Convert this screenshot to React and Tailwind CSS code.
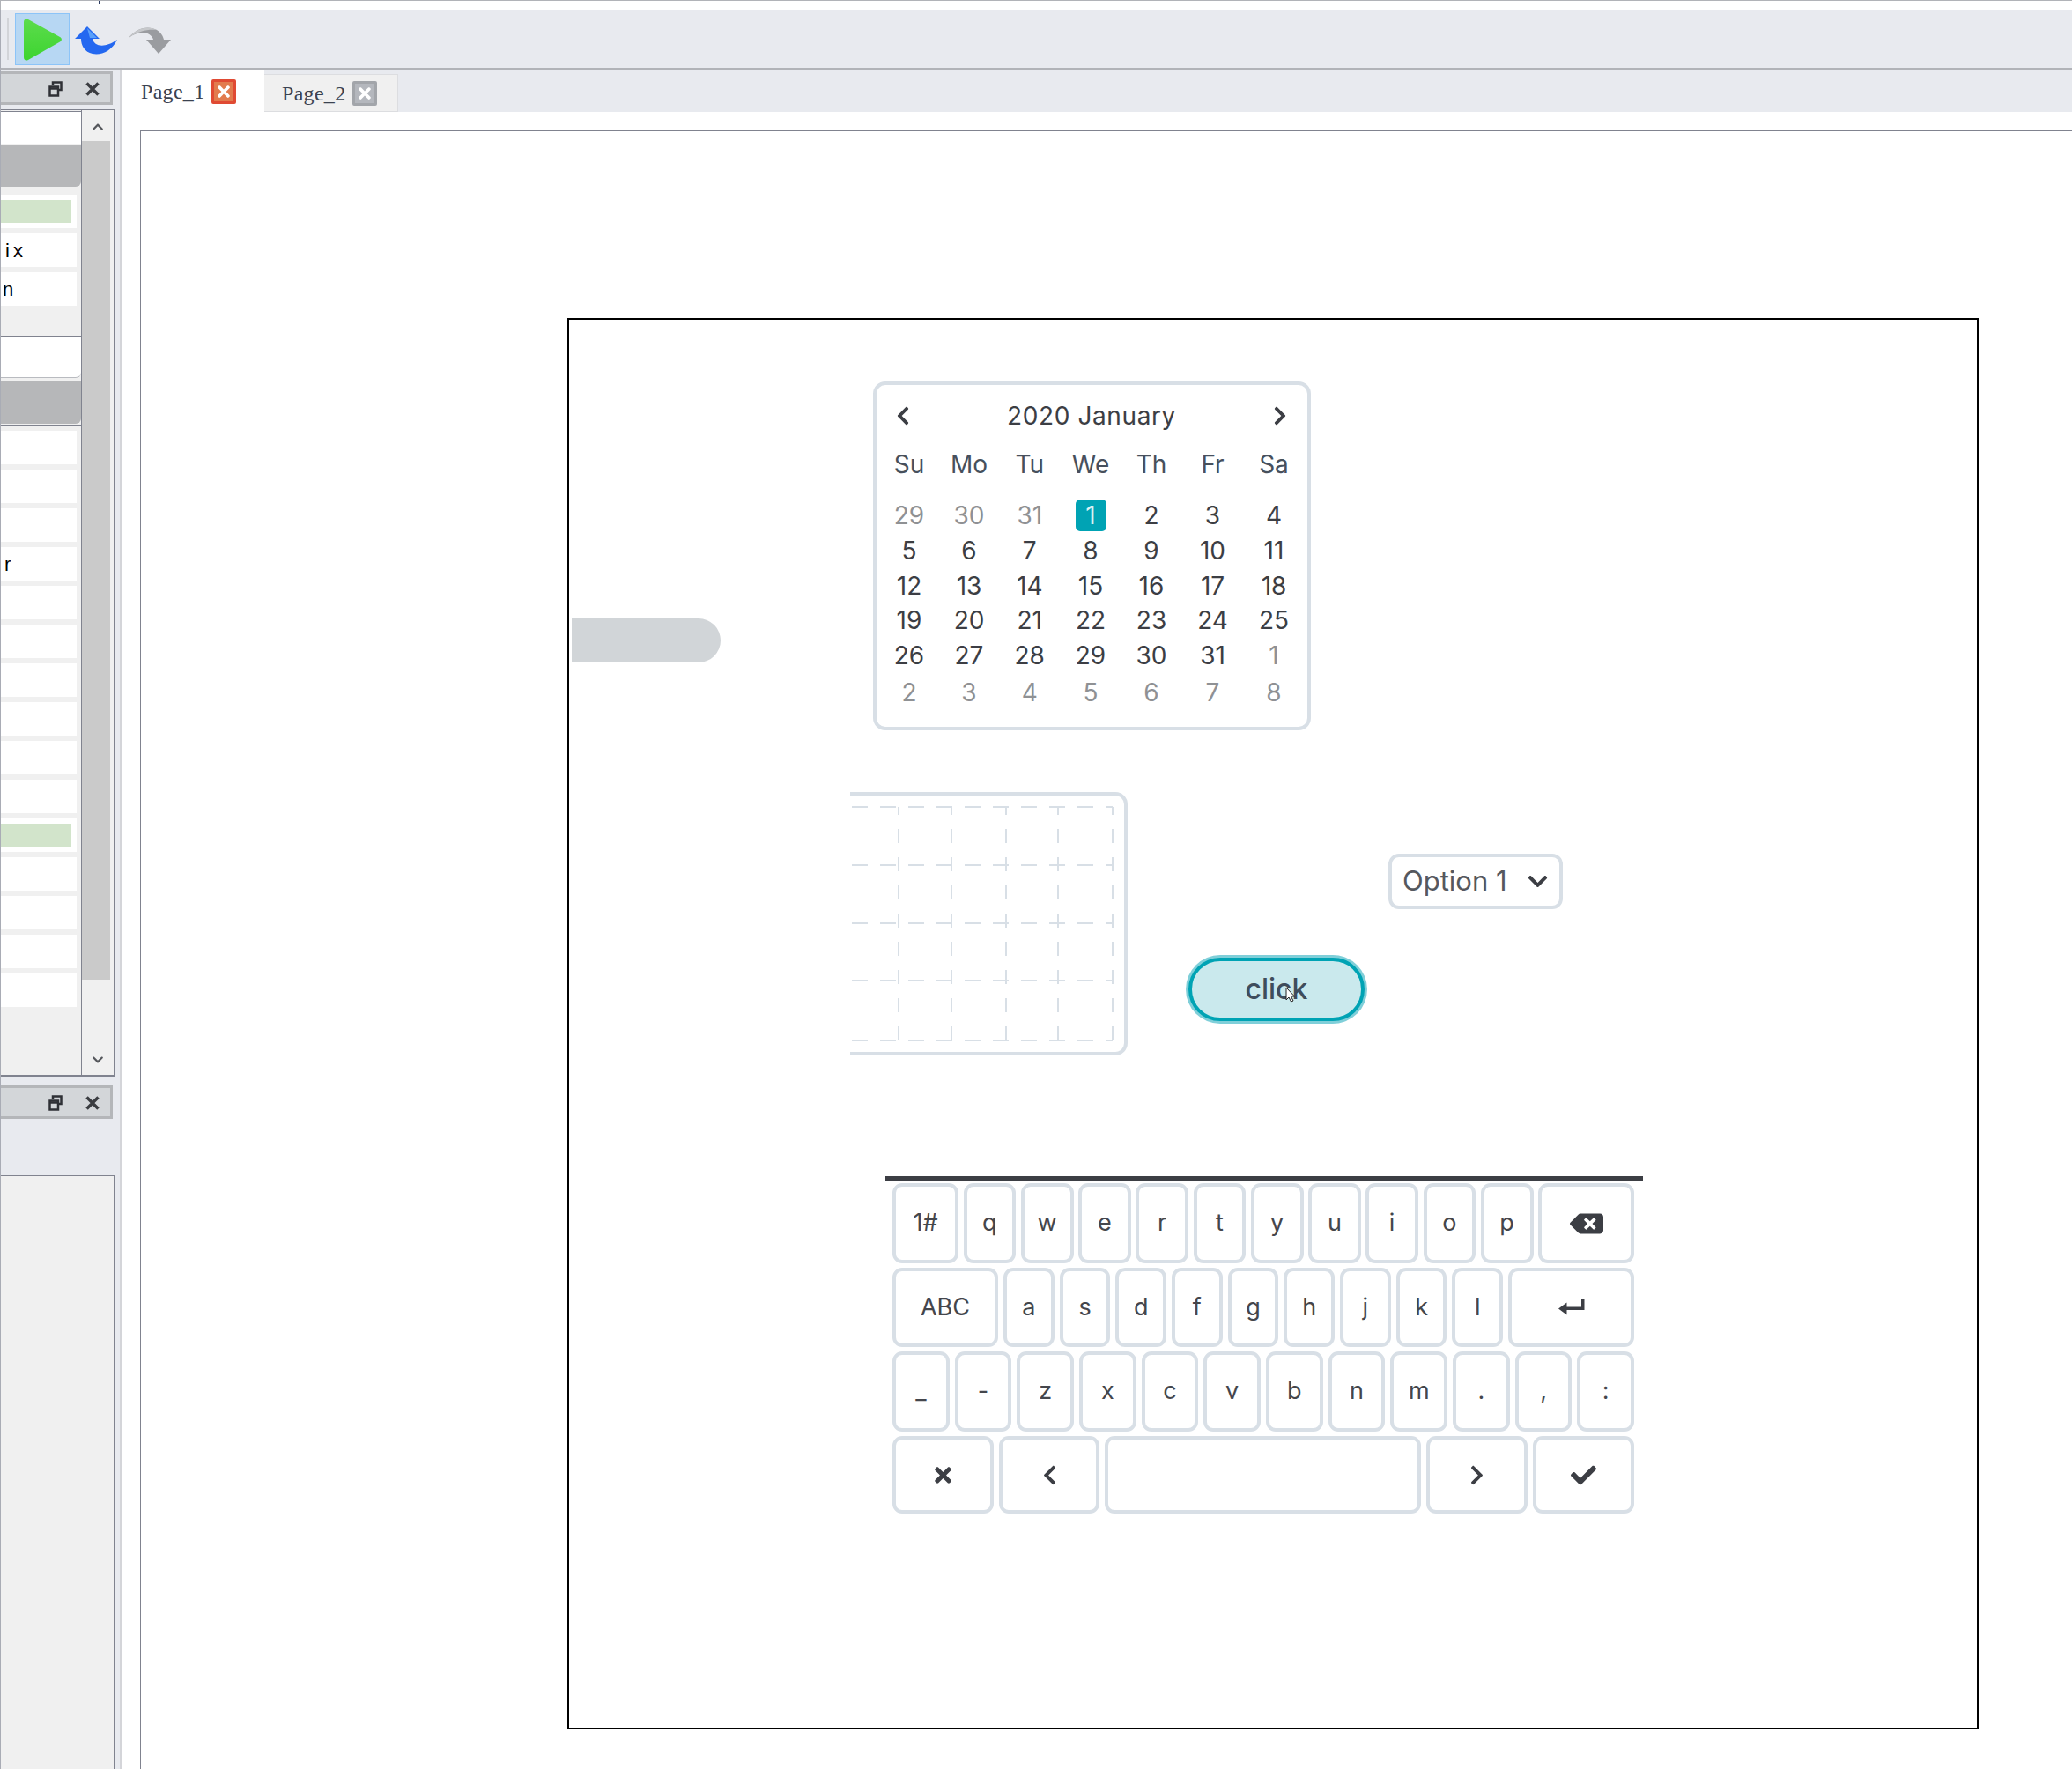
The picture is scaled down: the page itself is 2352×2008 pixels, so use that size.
import React from 'react';
import { FaBackspace, FaTimes, FaChevronLeft, FaChevronRight, FaCheck, FaChevronDown, FaChevronUp } from 'react-icons/fa';

const weekDays = ['Su', 'Mo', 'Tu', 'We', 'Th', 'Fr', 'Sa'];
const calendarRows = [
    [[29, 1], [30, 1], [31, 1], [1, 2], [2], [3], [4]],
    [[5], [6], [7], [8], [9], [10], [11]],
    [[12], [13], [14], [15], [16], [17], [18]],
    [[19], [20], [21], [22], [23], [24], [25]],
    [[26], [27], [28], [29], [30], [31], [1, 1]],
    [[2, 1], [3, 1], [4, 1], [5, 1], [6, 1], [7, 1], [8, 1]],
];
const rowHeights = ['h-[40px]', 'h-[40px]', 'h-[39px]', 'h-[40px]', 'h-[41px]', 'h-[43px]'];
const calendarCols = 'grid grid-cols-[68px_68px_69.5px_69px_69px_70px_69px]';

const EnterIcon = () => (
    <svg width="30" height="18" viewBox="0 0 30 18" fill="#3c3e44">
        <path d="M26 0h3.500v12H9.500v5.500L0 10.500 9.500 3.500V8.500H26z" />
    </svg>
);

const Key = ({ children, className = 'flex-1' }) => (
    <div className={`${className} min-w-0 border-[4px] border-[#d8dfe6] rounded-[11px] flex items-center justify-center text-[27px] text-[#44464c] bg-white`}>
        {children}
    </div>
);

const Keyboard = () => (
    <div className="absolute left-[359px] top-[972px] w-[860px] border-t-[6px] border-[#3c3e44] pt-[2px] pl-[8px] pr-[10px] flex flex-col gap-[5px]">
        <div className="flex gap-[5.5px] h-[91px]">
            <Key className="w-[75px]">1#</Key>
            {'qwertyuiop'.split('').map((k) => <Key key={k}>{k}</Key>)}
            <Key className="w-[109px]"><FaBackspace size={38} color="#3c3e44" /></Key>
        </div>
        <div className="flex gap-[6px] h-[90px]">
            <Key className="w-[120px]">ABC</Key>
            {'asdfghjkl'.split('').map((k) => <Key key={k}>{k}</Key>)}
            <Key className="w-[143px]"><EnterIcon /></Key>
        </div>
        <div className="flex gap-[6px] h-[91px]">
            {['_', '-', 'z', 'x', 'c', 'v', 'b', 'n', 'm', '.', ',', ':'].map((k) => <Key key={k}>{k}</Key>)}
        </div>
        <div className="flex gap-[6px] h-[88px]">
            <Key className="w-[115px]"><FaTimes size={27} color="#3c3e44" /></Key>
            <Key className="w-[114px]"><FaChevronLeft size={25} color="#3c3e44" /></Key>
            <Key />
            <Key className="w-[115px]"><FaChevronRight size={25} color="#3c3e44" /></Key>
            <Key className="w-[115px]"><FaCheck size={29} color="#3c3e44" /></Key>
        </div>
    </div>
);

const Calendar = () => (
    <div className="absolute left-[345px] top-[70px] w-[497px] h-[396px] border-[4px] border-[#d8dfe6] rounded-[14px] pl-[3px] text-[#3c3e44]">
        <div className="flex items-center justify-between h-[64px] pt-[5px] pl-[15px] pr-[19px]">
            <FaChevronLeft size={24} />
            <span className="text-[28px] tracking-[0.6px]">2020 January</span>
            <FaChevronRight size={24} />
        </div>
        <div className={`${calendarCols} h-[48px] pt-[4px] items-center text-[28px] text-[#47505c] text-center`}>
            {weekDays.map((d) => <span key={d}>{d}</span>)}
        </div>
        <div className="mt-[15px]">
            {calendarRows.map((row, i) => (
                <div key={i} className={`${calendarCols} ${rowHeights[i]} items-center text-[28px] text-center`}>
                    {row.map(([n, kind], j) => (
                        <span key={j} className="flex justify-center">
                            {kind === 2 ? (
                                <span className="w-[35px] h-[36px] bg-[#00a3b4] rounded-[5px] text-[#d9f1f4] flex items-center justify-center">{n}</span>
                            ) : (
                                <span className={kind === 1 ? 'text-[#8f9194]' : ''}>{n}</span>
                            )}
                        </span>
                    ))}
                </div>
            ))}
        </div>
    </div>
);

const hLines = [13, 79, 145, 210, 278];
const vLines = [55, 115, 177, 236, 298];

const ChartBox = () => (
    <div className="absolute left-[319px] top-[536px] w-[315px] h-[299px] border-[4px] border-l-0 border-[#d8dfe6] rounded-r-[14px]">
        <svg width="311" height="291" className="block" stroke="#d8dfe6" strokeWidth="2" fill="none">
            {hLines.map((y) => (
                <line key={y} x1="2" x2="298" y1={y} y2={y} strokeDasharray="18 14" />
            ))}
            {vLines.map((x) => (
                <line key={x} x1={x} x2={x} y1="13" y2="278" strokeDasharray="16 16" strokeDashoffset="7" />
            ))}
        </svg>
    </div>
);

const SelectBox = () => (
    <div className="absolute left-[930px] top-[606px] w-[198px] h-[63px] border-[4px] border-[#d8dfe6] rounded-[12px] flex items-center justify-between pl-[12px] pr-[12px]">
        <span className="text-[31px] text-[#55585e]">Option 1</span>
        <FaChevronDown size={25} color="#3c3e44" />
    </div>
);

const ClickButton = () => (
    <div className="absolute left-[703px] top-[724px] w-[200px] h-[72px] bg-[#cae9ed] border-[4px] border-[#00a3b4] rounded-full shadow-[0_0_0_3px_#80cfd9] flex items-center justify-center">
        <span className="text-[32px] font-medium text-[#3f4d5c] relative">
            click
            <svg className="absolute left-[45px] top-[21px]" width="13" height="19" viewBox="0 0 13 19">
                <path d="M1 1v14l3-3 2.500 5 2.500-1-2.500-5h4z" fill="#fff" stroke="#222" strokeWidth="1" />
            </svg>
        </span>
    </div>
);

const PanelHeader = () => (
    <div className="h-[38px] w-[127px] bg-[#d3d6d9] border-[3px] border-l-0 border-[#b4b6b9] flex items-center justify-end pr-[12px] gap-[26px]">
        <svg className="mt-[1px]" width="16" height="18" viewBox="0 0 16 18" fill="none" stroke="#2f3136" strokeWidth="2.500">
            <path d="M5 5V1.500h9.500V10H11" />
            <path d="M1.500 6.500H11V16.500H1.500z" />
            <path d="M1.500 8.500H11" />
        </svg>
        <svg className="mt-[1px]" width="16" height="16" viewBox="0 0 16 16" stroke="#3a3c40" strokeWidth="3.500">
            <path d="M1.500 1.500l13 13M14.500 1.500l-13 13" />
        </svg>
    </div>
);

const ListRow = ({ green, label, labelClass }) => (
    <div className="h-[38px] w-[86px] bg-white flex items-center overflow-hidden">
        {green && <div className="h-[26px] w-[80px] bg-[#d2e4cb]" />}
        {label && <span className={`font-['Liberation_Sans',sans-serif] text-[22px] text-black ${labelClass}`}>{label}</span>}
    </div>
);

const secondGroup = Array.from({ length: 15 }, (_, i) => i);

const Sidebar = () => (
    <div className="w-[138px] shrink-0 border-l border-[#a9acb5] border-r-2 border-r-[#d4d5d9] pt-[2px] flex flex-col">
        <PanelHeader />
        <div className="mt-[5px] w-[129px] h-[1098px] border-t border-r border-b-2 border-[#80838f] bg-[#f0f0f0] flex">
            <div className="w-[92px] border-r border-[#80838f] flex flex-col pt-[1px]">
                <div className="h-[38px] bg-white border-t border-b border-[#80838f]" />
                <div className="mt-[1px] h-[47px] bg-[#b6b7b9] rounded-br-[6px]" />
                <div className="mt-[2px] h-[168px] border-t border-b border-[#80838f] pt-[6px] flex flex-col gap-[6px]">
                    <ListRow green />
                    <ListRow label="ix" labelClass="ml-[5px] tracking-[4px]" />
                    <ListRow label="n" labelClass="ml-[2px]" />
                </div>
                <div className="mt-[1px] h-[46px] bg-white rounded-br-[6px] border-b border-[#b9bbc0]" />
                <div className="mt-[3px] h-[49px] bg-[#b6b7b9] rounded-br-[6px]" />
                <div className="mt-[1px] border-t border-[#80838f] pt-[6px] flex flex-col gap-[6px]">
                    {secondGroup.map((i) => (
                        <ListRow key={i} green={i === 10} label={i === 3 ? 'r' : null} labelClass="ml-[4px]" />
                    ))}
                </div>
            </div>
            <div className="w-[35px] flex flex-col">
                <div className="h-[35px] pt-[2px] flex items-center justify-center text-[#55575c]"><FaChevronUp size={14} /></div>
                <div className="h-[952px] w-[32px] bg-[#cacaca]" />
                <div className="flex-1 flex items-end justify-center pb-[10px] text-[#55575c]"><FaChevronDown size={14} /></div>
            </div>
        </div>
        <div className="mt-[10px]"><PanelHeader /></div>
        <div className="mt-[64px] w-[129px] flex-1 bg-[#f0f0f0] border-t border-r border-[#80838f]" />
    </div>
);

const Toolbar = () => (
    <div className="h-[68px] shrink-0 bg-[#e8eaef] border-b-2 border-[#b1b3b8] border-l border-l-[#a9acb5] flex items-center pl-[7px]">
        <div className="w-[2px] h-[48px] bg-[#d2d4d8]" />
        <div className="ml-[7px] w-[62px] h-[59px] bg-[#b7d7f3] border border-[#8cc4f8] flex items-center justify-center">
            <svg className="mt-[1px]" width="46" height="50" viewBox="0 0 46 50">
                <defs>
                    <linearGradient id="playFill" x1="0" y1="0" x2="0" y2="1">
                        <stop offset="0" stopColor="#5cdc4c" />
                        <stop offset="1" stopColor="#3dd430" />
                    </linearGradient>
                </defs>
                <path d="M2 5c0-3 2-4.500 5-3l36 20c2.500 1.500 2.500 4 0 5.500L7 48c-3 1.500-5 0-5-3z" fill="url(#playFill)" />
            </svg>
        </div>
        <svg className="ml-[5px] mt-[3px]" width="50" height="34" viewBox="0 0 50 34">
            <path d="M15 1 29 15H21c2 9 14 11 28 1-6 13-18 18-28 16C12 30 8 23 8 15H1z" fill="#2468f0" />
            <path d="M15 3 26 14H18" fill="#5aa0fa" />
        </svg>
        <svg className="ml-[11px] mt-[3px]" width="50" height="34" viewBox="0 0 50 34">
            <path d="M1 14C10 2 24 0 33 5c5 3 7 7 8 11h8L35 32 21 16h8C27 8 14 4 1 14z" fill="#9a9ca0" />
            <path d="M1 14C10 2 24 0 33 5c-8-1-20 0-32 9z" fill="#c6c8cb" />
        </svg>
    </div>
);

const Tabs = () => (
    <div className="h-[48px] shrink-0 flex items-end font-['Liberation_Serif',serif] text-[24px] tracking-[0.3px] text-[#3b4250]">
        <div className="w-[162px] h-[47px] bg-white flex items-center pl-[22px] pt-[1px]">
            <span>Page_1</span>
            <div className="ml-[8px] w-[28px] h-[28px] bg-[#e27b4e] border-[3px] border-[#e04a33] rounded-[2px] flex items-center justify-center">
                <FaTimes size={20} color="#fff" />
            </div>
        </div>
        <div className="w-[152px] h-[43px] bg-[#f0f0f0] border-t border-r border-b border-[#dcdde0] flex items-center pl-[20px] pt-[1px]">
            <span>Page_2</span>
            <div className="ml-[8px] w-[28px] h-[28px] bg-[#b4b7bd] border-[3px] border-[#a2a5aa] rounded-[2px] flex items-center justify-center">
                <FaTimes size={20} color="#fff" />
            </div>
        </div>
    </div>
);

const App = () => {
    return (
        <div className="w-[2352px] h-[2008px] overflow-hidden flex flex-col bg-[#e8eaef] font-[Inter,sans-serif]">
            <div className="h-[11px] shrink-0 bg-white border-t border-l border-[#b1b3b8] pl-[111px]">
                <div className="w-[2px] h-[3px] bg-[#2a3a60]" />
            </div>
            <Toolbar />
            <div className="flex-1 flex min-h-0">
                <Sidebar />
                <div className="flex-1 flex flex-col min-w-0">
                    <Tabs />
                    <div className="flex-1 bg-white pl-[21px] pt-[21px] min-h-0">
                        <div className="h-full border-t border-l border-[#80838f] pl-[484px] pt-[212px]">
                            <div className="relative w-[1602px] h-[1602px] border-2 border-black bg-white">
                                <Calendar />
                                <div className="absolute left-[3px] top-[339px] w-[169px] h-[50px] bg-[#d1d5d8] rounded-r-[25px]" />
                                <ChartBox />
                                <SelectBox />
                                <ClickButton />
                                <Keyboard />
                            </div>
                        </div>
                    </div>
                </div>
            </div>
        </div>
    );
};

export default App;
